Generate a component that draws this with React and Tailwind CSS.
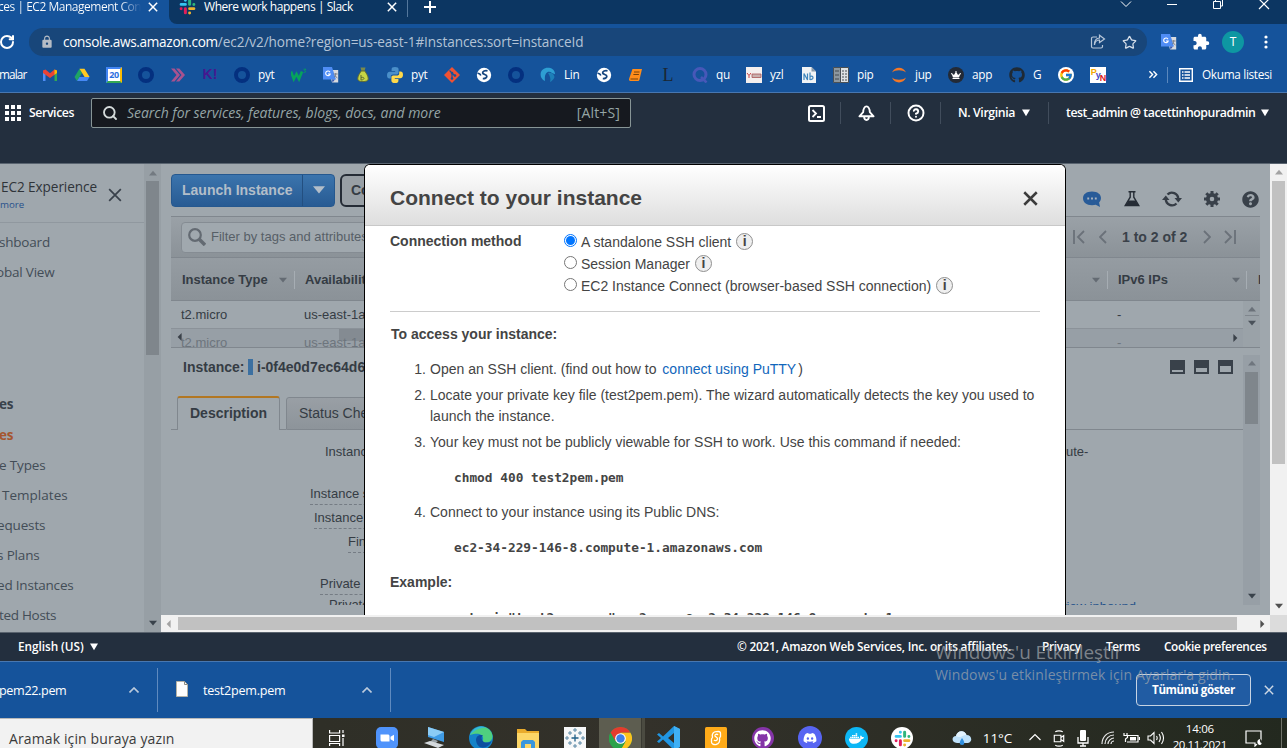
import React from "react";
import { FaGithub, FaDiscord, FaDocker, FaQuestionCircle, FaCrown } from "react-icons/fa";
import { FcGoogle } from "react-icons/fc";
import { MdExtension, MdLock } from "react-icons/md";
import { RotateCw, Star, CircleHelp, Search } from "lucide-react";

const UI = "font-['Open_Sans','Noto_Sans',sans-serif]";
const ARIAL = "font-['Liberation_Sans',Arial,sans-serif]";
const MONO = "font-['DejaVu_Sans_Mono',monospace] text-[12.8px] font-bold";

function Tri({ dir = "down", className = "" }) {
  const d = { fat: "M0 .5h10L5 9z", down: "M0 1h10L5 7z", up: "M0 7h10L5 1z", left: "M7 0v10L2 5z", right: "M3 0v10l5-5z" }[dir];
  return <svg viewBox="0 0 10 10" className={"h-2 w-2 shrink-0 " + className} fill="currentColor"><path d={d} /></svg>;
}

function Cross({ className = "", w = 1.8 }) {
  return (
    <svg viewBox="0 0 12 12" className={"shrink-0 " + className} fill="none" stroke="currentColor" strokeWidth={w}>
      <path d="M1 1l10 10M11 1L1 11" />
    </svg>
  );
}

function Slack({ className }) {
  return (
    <svg viewBox="0 0 16 16" className={className} strokeWidth="2.8" strokeLinecap="round" fill="none">
      <path d="M6 2v.1M2 6h4" stroke="#36c5f0" />
      <path d="M14 6v.1M10 2v4" stroke="#2eb67d" />
      <path d="M10 14v.1M14 10h-4" stroke="#ecb22e" />
      <path d="M2 10v.1M6 14v-4" stroke="#e01e5a" />
    </svg>
  );
}

function Translate() {
  return (
    <svg viewBox="0 0 16 16" className="h-4 w-4 shrink-0">
      <path d="M6 3h9.2v12.5H9z" fill="#d8dade" />
      <path d="M0 0h9l4 12.5H0z" fill="#4f8df5" />
      <path d="M9 12.5h3l-2.5 3z" fill="#3355b0" />
      <path d="M7 5.2A2.3 2.3 0 1 0 7.2 7H5" fill="none" stroke="#fff" strokeWidth="1.1" />
      <path d="M10.5 7h4.2M12.7 6v1c0 2-1 3-1.8 3.6M12 8.4c.5 1.2 1.4 2 2.5 2.6" stroke="#70757d" fill="none" strokeWidth=".8" />
    </svg>
  );
}

function Chrome({ className }) {
  return (
    <svg viewBox="0 0 24 24" className={className}>
      <circle cx="12" cy="12" r="12" fill="#2ca24c" />
      <path d="M1.6 6A12 12 0 0 1 22.4 6H12L6.8 15z" fill="#e33b2e" />
      <path d="M12 6h10.4A12 12 0 0 1 12 24l5.2-9z" fill="#fcc31e" />
      <path d="M1.6 6A12 12 0 0 0 12 24l5.2-9H6.8z" fill="#2ca24c" />
      <circle cx="12" cy="12" r="5.6" fill="#fff" />
      <circle cx="12" cy="12" r="4.4" fill="#3f7fe8" />
    </svg>
  );
}

const S = ({ children }) => <svg viewBox="0 0 16 16" className="h-4 w-4 shrink-0">{children}</svg>;
const Ring = () => <S><circle cx="8" cy="8" r="6" fill="none" stroke="#04307f" strokeWidth="4" /></S>;
const Globe = () => (
  <S>
    <circle cx="8" cy="8" r="7.2" fill="#fff" />
    <path d="M11.500 3.800C9 3.200 6.500 4.200 6.700 6c.3 1.700 4 1.300 4.100 3.200 0 1.800-2 2.600-4 2.500" fill="none" stroke="#16467f" strokeWidth="1.800" />
    <path d="M1.500 6.200c1.500 0 2.800.8 3.300 2.300" fill="none" stroke="#16467f" strokeWidth="1.500" />
  </S>
);
const Python = () => (
  <S>
    <path d="M8 0C5.500 0 4.600.9 4.600 2.300V4H8.200v.7H2.700C1 4.700 0 6 0 8.200s1 3.300 2.300 3.300h1.500V9.600c0-1.300 1-2.200 2.200-2.200h3.800c1.100 0 1.800-.8 1.800-1.800V2.300C11.600.8 10.200 0 8 0z" fill="#4a8fc9" />
    <path d="M8 16c2.500 0 3.400-.9 3.400-2.300V12H7.800v-.7h5.500c1.700 0 2.700-1.300 2.700-3.500s-1-3.300-2.300-3.300h-1.500v1.900c0 1.300-1 2.200-2.200 2.200H6.200c-1.100 0-1.800.8-1.800 1.800v3.300C4.400 15.200 5.800 16 8 16z" fill="#ffd94a" />
  </S>
);

const bookmarks = [
  ["w-[32px]", <S key="i"><path d="M1 14V4l2.500-1v11z" fill="#4f8df5" /><path d="M15 14V4l-2.500-1v11z" fill="#34a853" /><path d="M1 3.500L3.500 2.600 8 6.200l4.500-3.600L15 3.500V6L8 11 1 6z" fill="#ea4335" /><path d="M12.500 2.600L15 3.500V6l-2.500 1.800z" fill="#fbbc04" /></S>],
  ["w-[32px]", <S key="i"><path d="M5.500 1.800L8 6 3 14 .5 10z" fill="#1fa463" /><path d="M5.500 1.800h5L15.600 10h-5z" fill="#ffc922" /><path d="M5.500 10h10L13 14H3z" fill="#4688f4" /></S>],
  ["w-[32px]", <span key="i" className="flex h-4 w-4 items-center justify-center border-[2.5px] border-t-[#4285f4] border-r-[#fbbc04] border-b-[#34a853] border-l-[#4285f4] bg-white text-[9px] font-bold tracking-[-0.5px] text-[#2d6fe0]">20</span>],
  ["w-[32px]", <Ring key="i" />],
  ["w-[32px]", <S key="i"><path d="M1 1.500l5.500 6.500L1 14.500h3.500L10 8 4.500 1.500zM6 1.500L11.500 8 6 14.500h3.300L15 8 9.300 1.500z" fill="#a8528f" /></S>],
  ["w-[32px]", <span key="i" className="w-4 pb-0.5 text-center font-['Liberation_Sans'] text-[14px] font-bold text-[#46178f]">K!</span>],
  ["w-[57px]", <Ring key="i" />, "pyt"],
  ["w-[32px]", <S key="i"><path d="M0 4.500l2.800 7.500 2.700-5 2.500 5 3-7.500" fill="none" stroke="#06a35c" strokeWidth="2.600" /><path d="M12.500 2.200h2.400l-1.300 1.500c1.300 0 1.600 2.200-.9 1.800" fill="none" stroke="#06a35c" strokeWidth=".9" /></S>],
  ["w-[32px]", <Translate key="i" />],
  ["w-[32px]", <S key="i"><path d="M5.500.5h5L9.500 4h-3z" fill="#7a8a4b" /><path d="M6.200 4h3.600c1.600 2.500 3.500 5 3.500 8 0 3.500-10.600 3.500-10.600 0 0-3 1.900-5.500 3.500-8z" fill="#c6d645" stroke="#5d6b37" strokeWidth="1" /><path d="M6 8v5M6 10.500c4-1 4 2.500 0 2.500" fill="none" stroke="#5d6b37" strokeWidth="1" /></S>],
  ["w-[57px]", <Python key="i" />, "pyt"],
  ["w-[32px]", <S key="i"><path d="M8 0l8 8-8 8-8-8z" fill="#f05133" /><path d="M5.500 3.500L8 6v6M8 6l3 3" stroke="#15539b" strokeWidth="1.200" fill="none" /><circle cx="8" cy="6" r="1.300" fill="#15539b" /><circle cx="8" cy="11.500" r="1.300" fill="#15539b" /><circle cx="11" cy="8.500" r="1.300" fill="#15539b" /></S>],
  ["w-[32px]", <Globe key="i" />],
  ["w-[32px]", <Ring key="i" />],
  ["w-[56px]", <S key="i"><path d="M1 10C-1 3 5 0 9 .8c4 .6 6 3.500 6 6.500L12 6C8 3 4 6 5 14c-2-1-3.500-2.500-4-4z" fill="#2e9fd3" /><path d="M8 6c3-1 6 .5 6.500 4-.8 2.500-2.500 4-4.500 5 1-3 0-6-2-9z" fill="#1d7fb8" /></S>, "Lin"],
  ["w-[32px]", <Globe key="i" />],
  ["w-[32px]", <S key="i"><path d="M4.500 2h9.500L11.500 12.500c-.3 1-.8 1.500-2 1.500H2.500C1 14 .8 12.800 1.200 11.500z" fill="#ff8c1a" /><path d="M6 5h5.500M5.400 7.500h5.500M2.500 12h7.500" stroke="#7a4208" strokeWidth="1.100" /></S>],
  ["w-[32px]", <span key="i" className="w-4 text-center font-['Liberation_Serif'] text-[18px] leading-4 text-[#1b2733]">L</span>],
  ["w-[54px]", <S key="i"><circle cx="8" cy="7.500" r="6" fill="none" stroke="#4758b8" strokeWidth="3" /><path d="M9 10l5.500 5.500" stroke="#4758b8" strokeWidth="2.500" /></S>, "qu"],
  ["w-[55px]", <S key="i"><path d="M0 0h16v16H0z" fill="#f4efee" /><path d="M1 6l2 2.500L5 6M3 8.500V11" stroke="#c44" fill="none" /><path d="M6 7h9v3.500H6z" fill="#c9b0ae" stroke="#a55" strokeWidth=".8" /></S>, "yzl"],
  ["w-[32px]", <S key="i"><path d="M1 0h9.500L15 4.500V16H1z" fill="#f1f3f5" /><path d="M10.500 0v4.500H15" fill="#8a99a8" /><path d="M3 13V6.500L6.500 13V6.500M9 5.500V13M9 9.500c4-1.500 4 3.500 0 3" stroke="#3f86bd" strokeWidth="1.200" fill="none" /></S>],
  ["w-[58px]", <S key="i"><path d="M.5.500h7v15h-7zM7.500.500h8v15h-8z" fill="#dfe2e3" stroke="#4a5055" /><path d="M1 1h6v14H1z" fill="#8d979e" /><path d="M2 4h4M2 8h4M2 12h4M9 4h2M12 4h2M9 7h2M12 7h2M9 10h2M12 10h2M9 13h2M12 13h2" stroke="#454c52" strokeWidth="1.200" /></S>, "pip"],
  ["w-[57px]", <S key="i"><path d="M1 5.500C3.500-1 12.500-1 15 5.500 11.500 2.500 4.500 2.500 1 5.500zM1 10.500c2.500 6.500 11.500 6.500 14 0-3.500 3-10.500 3-14 0z" fill="#f37726" /></S>, "jup"],
  ["w-[61px]", <span key="i" className="flex h-4 w-4 items-center justify-center rounded-full bg-[#232a36]"><FaCrown className="h-2 w-2.5 text-white" /></span>, "app"],
  ["w-[49px]", <FaGithub key="i" className="h-4 w-4 shrink-0 text-[#1f2a35]" />, "G"],
  ["w-[32px]", <span key="i" className="flex h-4 w-4 items-center justify-center rounded-full bg-white"><FcGoogle className="h-3.5 w-3.5" /></span>],
  ["w-[50px]", <span key="i" className="flex h-4 w-4 items-center justify-center bg-white font-['Liberation_Sans'] text-[9px] font-bold tracking-[-1px]"><i className="mb-1.5 not-italic text-[#f5a800]">P</i><i className="not-italic text-[#4747c9]">y</i><i className="mt-1.5 not-italic text-[#e02020]">N</i></span>],
];

function BrowserChrome() {
  return (
    <div className={"flex h-[93px] shrink-0 flex-col border-b border-[#4877b0] bg-[#15539b] text-white " + UI}>
      <div className="flex h-6 shrink-0">
        <div className="flex h-6 w-[169px] shrink-0 items-start">
          <div className="flex w-[141px] overflow-hidden whitespace-nowrap bg-linear-to-r from-white from-85% to-[#15539b] bg-clip-text text-[12px] leading-[14px] text-transparent">
            <span className="-ml-0.5 tracking-[-0.48px]">ces | EC2 Management Con</span>
          </div>
          <Cross className="mt-0.5 ml-[7px] h-2.5 w-2.5" />
        </div>
        <div className="flex flex-1 items-start rounded-bl-lg bg-[#0c3662]">
          <div className="flex h-[17px] w-[239px] items-start border-r border-[#54779c]">
            <Slack className="-mt-0.5 ml-[10px] h-[17px] w-[17px]" />
            <span className="ml-[8px] w-[183px] text-[12px] leading-[14px] tracking-[-0.45px]">Where work happens | Slack</span>
            <Cross className="mt-0.5 h-2.5 w-2.5" />
          </div>
          <svg viewBox="0 0 12 12" className="mt-px ml-[16px] h-3 w-3" stroke="#fff" strokeWidth="2"><path d="M6 0v12M0 6h12" /></svg>
          <div className="ml-auto flex h-3 items-start gap-[34px] pr-[17px]">
            <svg viewBox="0 0 12 12" className="h-3 w-3" fill="none" stroke="#fff"><path d="M1 1.500l5 5 5-5" /></svg>
            <svg viewBox="0 0 12 12" className="h-3 w-3" stroke="#fff"><path d="M1 4.500h10" /></svg>
            <svg viewBox="0 0 12 12" className="h-3 w-3" fill="none" stroke="#fff"><path d="M1.500 1.500h7v7h-7zM3.500 1V-1h7v7H9" /></svg>
            <svg viewBox="0 0 12 12" className="h-3 w-3" stroke="#fff" strokeWidth="1.200"><path d="M1-1l10 10M11-1L1 9" /></svg>
          </div>
        </div>
      </div>
      <div className="flex h-9 shrink-0 items-center">
        <RotateCw className="-ml-px h-[16px] w-[16px] shrink-0" strokeWidth={3} />
        <div className="ml-[14px] flex h-7 w-[1118px] items-center rounded-full bg-[#18467a] pr-[10px] pl-[11px]">
          <MdLock className="h-[14px] w-[14px] text-[#b5bcc5]" />
          <span className="ml-[9px] text-[13.6px] text-[#b3c3d6]"><span className="tracking-[-0.32px] text-white">console.aws.amazon.com</span><span className="tracking-[-0.09px]">/ec2/v2/home?region=us-east-1#Instances:sort=instanceId</span></span>
          <svg viewBox="0 0 16 16" className="ml-auto h-4 w-4" fill="none" stroke="#b7c6d8" strokeWidth="1.200"><path d="M7 3H3.200C2 3 1.500 3.600 1.500 4.500v8c0 1 .6 1.500 1.500 1.500h8c1 0 1.500-.6 1.500-1.500V11M4.500 11c.5-3.500 2.500-5 5-5V8.500L14.500 5 9.500 1.200V4C6 4 4.200 7 4.500 11z" /></svg>
          <Star className="ml-4 h-[15px] w-[15px] text-[#d6dfea]" strokeWidth={2} />
        </div>
        <div className="ml-[14px]"><Translate /></div>
        <MdExtension className="ml-[15px] h-[18px] w-[18px]" />
        <span className="ml-[12px] flex h-[22px] w-[22px] items-center justify-center rounded-full bg-[#0e97a2] text-[12px]">T</span>
        <svg viewBox="0 0 4 14" className="ml-[20px] h-3.5 w-1" fill="#fff"><circle cx="2" cy="2" r="1.600" /><circle cx="2" cy="7" r="1.600" /><circle cx="2" cy="12" r="1.600" /></svg>
      </div>
      <div className="flex h-[29px] shrink-0 items-center text-[11.800px] leading-4">
        <div className="w-[42px] shrink-0 pb-[2px]"><span className="-ml-px tracking-[-0.9px]">malar</span></div>
        {bookmarks.map(([w, icon, label], i) => (
          <div key={i} className={"flex shrink-0 items-center gap-2 " + w}>
            {icon}
            {label && <span className="pb-[2px] tracking-[-0.3px]">{label}</span>}
          </div>
        ))}
        <svg viewBox="0 0 12 10" className="ml-[7px] h-[9px] w-[12px]" fill="none" stroke="#fff" strokeWidth="1.600"><path d="M2 1.500L5.500 5 2 8.500M6.500 1.500L10 5 6.500 8.500" /></svg>
        <div className="ml-2 h-4 border-l border-[#5b88bd]" />
        <svg viewBox="0 0 14 14" className="ml-[11px] h-3.5 w-3.5" fill="none" stroke="#fff"><path d="M.7.700h12.600v12.600H.7z" strokeWidth="1.400" /><path d="M3 4h1.500M3 7h1.500M3 10h1.500M5.500 4H11M5.500 7H11M5.500 10H11" strokeWidth="1.500" /></svg>
        <span className="ml-[9px] pb-[2px] whitespace-nowrap tracking-[-0.32px]">Okuma listesi</span>
      </div>
    </div>
  );
}

function AwsHeader() {
  return (
    <div className={"flex h-[71px] shrink-0 items-start border-b border-[#596470] bg-[#232f3e] text-[12.3px] text-white " + UI}>
      <div className="flex h-10 w-full items-center">
        <svg viewBox="0 0 16 16" className="ml-[5px] h-4 w-4" fill="#fff"><path d="M0 0h4v4H0zM6 0h4v4H6zM12 0h4v4h-4zM0 6h4v4H0zM6 6h4v4H6zM12 6h4v4h-4zM0 12h4v4H0zM6 12h4v4H6zM12 12h4v4h-4z" /></svg>
        <span className="ml-2 w-[62px] pt-px font-semibold tracking-[-0.4px]">Services</span>
        <div className="flex h-[30px] w-[540px] items-center rounded-[2px] border border-[#879596] bg-[#16191f] px-[10px] text-[14px] text-[#95a5a6]">
          <Search className="h-4 w-4 text-[#d5dbdb]" strokeWidth={2.800} />
          <span className="ml-[9px] pb-px tracking-[-0.03px] italic">Search for services, features, blogs, docs, and more</span>
          <span className="ml-auto pb-px tracking-[0.15px]">[Alt+S]</span>
        </div>
        <svg viewBox="0 0 17 17" className="ml-[177px] h-[17px] w-[17px]" fill="none" stroke="#fff" strokeWidth="2"><rect x="1" y="1" width="15" height="15" rx="1.500" /><path d="M4.500 5l3.500 3.500L4.500 12M9 12h4" strokeWidth="1.800" /></svg>
        <div className="ml-[15px] h-[22px] border-l border-[#414d5c]" />
        <svg viewBox="0 0 18 18" className="ml-[17px] h-[18px] w-[17px]" fill="none" stroke="#fff" strokeWidth="2"><path d="M1.500 12.500h15L12.500 8C12.500 5 11 2 9 2S5.500 5 5.500 8zM6.500 13c0 4.500 5 4.500 5 0" strokeLinejoin="round" /></svg>
        <div className="ml-[15px] h-[22px] border-l border-[#414d5c]" />
        <CircleHelp className="ml-[16px] h-[18px] w-[18px]" strokeWidth={2.600} />
        <div className="ml-[15px] h-[22px] border-l border-[#414d5c]" />
        <span className="ml-[17px] w-[64px] pt-px font-semibold whitespace-nowrap tracking-[-0.38px]">N. Virginia</span>
        <Tri dir="fat" />
        <div className="ml-[18px] h-[22px] border-l border-[#414d5c]" />
        <span className="ml-[17px] w-[195px] pt-px font-semibold whitespace-nowrap tracking-[-0.45px]">test_admin @ tacettinhopuradmin</span>
        <Tri dir="fat" />
      </div>
    </div>
  );
}

function Sidebar() {
  return (
    <div className={"flex w-[161px] shrink-0 " + UI}>
      <div className="flex w-[144px] flex-col overflow-hidden text-[13.500px] whitespace-nowrap text-[#434d57]">
        <div className="flex h-[59px] shrink-0 justify-between border-b border-[#90989f] pt-[13px] pr-[22px]">
          <div className="flex flex-col pl-px">
            <span className="text-[13.600px] leading-5 tracking-[-0.08px] text-[#2f3439]">EC2 Experience</span>
            <span className="mt-[2px] -ml-px text-[9.700px] leading-3 text-[#27518c]">more</span>
          </div>
          <Cross className="mt-[11px] h-[14px] w-[14px] text-[#39414b]" w={1.500} />
        </div>
        <div className="mt-1 flex h-[150px] shrink-0 flex-col leading-[30px]">
          <span className="-ml-px tracking-[-0.2px]">shboard</span>
          <span className="-ml-1 tracking-[-0.2px]">obal View</span>
        </div>
        <div className="mt-[12px] flex flex-col leading-[30px] tracking-[-0.15px]">
          <span className="-ml-px font-bold leading-[31px] text-[#39424b]">es</span>
          <span className="-ml-px font-bold text-[#a5562f]">es</span>
          <span className="-ml-px">e Types</span>
          <span className="ml-[2px] tracking-[0.02px]">Templates</span>
          <span className="-ml-[3px]">equests</span>
          <span className="-ml-[3px]">s Plans</span>
          <span className="-ml-[3px] tracking-[-0.2px]">ed Instances</span>
          <span className="-ml-px tracking-[-0.3px]">ted Hosts</span>
        </div>
      </div>
      <div className="flex w-[17px] flex-col items-center bg-[#979fa5] pt-1 text-[#737a81]">
        <Tri dir="up" className="mt-0.5" />
        <div className="mt-[3px] h-[174px] w-[13px] bg-[#7f868c]" />
        <Tri className="mt-auto mb-[4px] text-[#39424b]" />
      </div>
    </div>
  );
}

const icoLine = "h-[14px]";
const dashed = "border-b border-dashed border-[#757c84]";

function Console() {
  return (
    <div className={"flex h-[451px] w-[1109px] flex-col overflow-hidden bg-[#9fa7ad] pr-[10px] pl-[10px] text-[13px] whitespace-nowrap text-[#353c44] " + ARIAL}>
      <div className="flex h-[52px] shrink-0 items-start pt-[10px]">
        <div className="flex h-[33px] w-[164px] items-center rounded border border-[#25588f] bg-linear-to-b from-[#3b74ad] to-[#285b93] text-[14px] font-bold text-[#b3bec9]">
          <span className="w-[130px] pl-[10px]">Launch Instance</span>
          <span className="flex h-full flex-1 items-center justify-center border-l border-[#234f80] pt-px"><Tri className="h-3 w-3" /></span>
        </div>
        <div className="ml-[5px] flex h-[33px] w-[90px] items-center rounded-md border-2 border-[#252c36] bg-[#989fa5] pl-[9px] text-[14px] font-bold">Connect</div>
        <div className="ml-auto flex items-center gap-[22px] pt-[16px] pr-[1px]">
          <svg viewBox="0 0 20 18" className="h-[17px] w-[20px]"><path d="M10 .5c6 0 9.500 3 9.500 7 0 2-.8 3.600-2 4.800l1 4.700-4.500-2.500c-1 .3-2.500.5-4 .5C4 15 .5 12 .5 7.700S4 .5 10 .5z" fill="#285b98" /><path d="M5 7h2v2H5zM9 7h2v2H9zM13 7h2v2h-2z" fill="#a9b4bf" /></svg>
          <svg viewBox="0 0 16 16" className="h-4 w-4"><path d="M4.500.800h7M6.200 1v5.200L1.200 14.500h13.600L9.800 6.200V1" fill="none" stroke="#252c35" strokeWidth="1.400" /><path d="M4.500 9.500h7l3.500 5.500H1z" fill="#252c35" /></svg>
          <svg viewBox="0 0 20 18" className="h-[18px] w-[20px]" fill="none" stroke="#363d46" strokeWidth="2.400"><path d="M5.500 4.500A6.300 6.300 0 0 1 16.200 9M14.500 13.500A6.300 6.300 0 0 1 3.800 9" /><path d="M12.500 8h7.500l-3.700 4.500zM0 10h7.500L3.800 5.500z" fill="#363d46" stroke="none" /></svg>
          <svg viewBox="0 0 16 16" className="h-4 w-4"><circle cx="8" cy="8" r="4.200" fill="none" stroke="#39414a" strokeWidth="3.800" /><path d="M8 0v4M8 12v4M0 8h4M12 8h4M2.300 2.300l3 3M10.700 10.700l3 3M13.700 2.300l-3 3M5.300 10.700l-3 3" stroke="#39414a" strokeWidth="3" /></svg>
          <FaQuestionCircle className="h-[17px] w-[17px] text-[#39414a]" />
        </div>
      </div>
      <div className="flex h-[42px] shrink-0 items-center border-t border-b border-[#80878e] bg-linear-to-b from-[#9aa1a7] to-[#8b9298] pl-[10px]">
        <div className="flex h-[31px] w-[400px] items-center rounded border border-[#858c93] bg-[#a0a8ae] pl-[6px] text-[#575f67]">
          <svg viewBox="0 0 18 18" className="h-[18px] w-[18px]" fill="none" stroke="#636a72"><circle cx="7" cy="7" r="5.800" strokeWidth="2.200" /><path d="M11 11l6 6" strokeWidth="3.500" /></svg>
          <span className="ml-[5px]">Filter by tags and attributes or search by keyword</span>
        </div>
        <div className="ml-auto flex items-center pr-[24px] text-[#6a7179]">
          <svg viewBox="0 0 12 14" className={icoLine} fill="none" stroke="currentColor" strokeWidth="1.800"><path d="M1 0v14M11 1L5 7l6 6" /></svg>
          <svg viewBox="0 0 8 14" className={"ml-[14px] " + icoLine} fill="none" stroke="currentColor" strokeWidth="1.800"><path d="M7 1L1 7l6 6" /></svg>
          <span className="mx-[15px] w-[66px] text-[14px] font-bold text-[#3a4149]">1 to 2 of 2</span>
          <svg viewBox="0 0 8 14" className={icoLine} fill="none" stroke="currentColor" strokeWidth="1.800"><path d="M1 1l6 6-6 6" /></svg>
          <svg viewBox="0 0 12 14" className={"ml-[13px] " + icoLine} fill="none" stroke="currentColor" strokeWidth="1.800"><path d="M11 0v14M1 1l6 6-6 6" /></svg>
        </div>
      </div>
      <div className="flex h-[43px] shrink-0 items-center border-b border-[#80878e] bg-linear-to-b from-[#959ca2] to-[#8b9298] pt-px font-bold">
        <span className="w-[108px] pl-[11px]">Instance Type</span>
        <Tri className="mt-0.5 text-[#646b73]" />
        <div className="ml-[7px] h-[18px] border-l border-[#a6adb3]" />
        <span className="w-[797px] pl-[10px]">Availability Zone</span>
        <Tri className="mt-0.5 text-[#646b73]" />
        <div className="ml-[7px] h-[18px] border-l border-[#a6adb3]" />
        <span className="w-[124px] pl-[10px]">IPv6 IPs</span>
        <Tri className="mt-0.5 text-[#646b73]" />
        <div className="ml-[6px] h-[18px] border-l border-[#a6adb3]" />
        <span className="w-[13px] overflow-hidden pl-[11px]">K</span>
      </div>
      <div className="flex h-[47px] shrink-0 border-b border-[#80878e]">
        <div className="flex w-[1072px] flex-col">
          <div className="flex h-[28px] shrink-0 items-center border-b border-[#8b9299]">
            <span className="w-[133px] pl-[10px]">t2.micro</span><span className="w-[813px]">us-east-1a</span><span>-</span>
          </div>
          <div className="flex h-[18px] items-center overflow-hidden bg-[#979fa6] text-[#6d757d]">
            <Tri dir="left" className="-mt-0.5 ml-[5px] -mr-[3px] h-2.5 w-2 text-[#3a4149]" />
            <span className="w-[123px] pt-[9px]">t2.micro</span>
            <span className="relative z-0 w-[813px] pt-[9px] before:absolute before:top-[3px] before:left-[35px] before:-z-10 before:h-[14px] before:w-[400px] before:bg-[#848b92]">us-east-1a</span>
            <span className="pt-[9px]">-</span>
            <Tri dir="right" className="mr-1 ml-auto h-2.5 w-2 text-[#3a4149]" />
          </div>
        </div>
        <div className="flex w-[17px] flex-col items-center bg-[#9aa2a8]">
          <Tri dir="up" className="mt-[5px] text-[#6a7179]" />
          <div className="mt-px w-3.5 border-b border-[#80878e]" />
          <Tri className="mt-1 text-[#4a525a]" />
        </div>
      </div>
      <div className="flex h-[257px] shrink-0">
        <div className="flex w-[1072px] flex-col">
          <div className="flex h-[48px] shrink-0 items-start pt-[8px] pl-[12px] text-[14px] font-bold">
            <span className="w-[65px] leading-[23px]">Instance:</span>
            <div className="mt-[3px] h-4 w-[5px] bg-[#3c70a1]" />
            <span className="ml-[4px] leading-[23px]">i-0f4e0d7ec64d67b93</span>
            <svg viewBox="0 0 64 14" className="mt-1 mr-[9px] ml-auto h-[14px] w-[64px]" fill="#39414a" fillRule="evenodd"><path d="M0 0h15v14H0zM2 10h11v2H2zM24 0h15v14H24zM26 8h11v4H26zM48 0h15v14H48zM50 6h11v6H50z" /></svg>
          </div>
          <div className="flex h-[34px] shrink-0 items-end text-[14px]">
            <div className="h-full w-[6px] border-b border-[#80878e]" />
            <div className="flex h-[34px] w-[103px] items-center rounded-t-[3px] border-t-2 border-r border-l border-t-[#b27722] border-r-[#80878e] border-l-[#80878e] pb-px pl-[12px] font-bold">Description</div>
            <div className="h-full w-[6px] border-b border-[#80878e]" />
            <div className="flex h-[33px] w-[120px] items-center rounded-t-[3px] border border-[#80878e] bg-linear-to-b from-[#999fa5] to-[#8d949a] pl-[12px]">Status Checks</div>
            <div className="h-full flex-1 border-b border-[#80878e]" />
          </div>
          <div className="flex h-[175px] shrink-0 overflow-hidden">
            <div className="flex w-[260px] flex-col items-start pt-[10px] leading-[20px]">
              <span className="ml-[154px] pt-[2px]">Instance ID</span>
              <span className={"mt-[22px] ml-[139px] " + dashed}>Instance state</span>
              <span className={"mt-[3px] ml-[143px] " + dashed}>Instance type</span>
              <span className={"mt-[3px] ml-[177px] " + dashed}>Finding</span>
              <span className={"mt-[21px] ml-[149px] " + dashed}>Private DNS</span>
              <span className="ml-[158px]">Private IPs</span>
            </div>
            <div className="flex w-[680px] flex-col items-start pt-[12px] pl-[635px] leading-[20px]">
              <span>ute-</span>
              <span className="mt-[135px] -ml-[6px] text-[#24528a]">view inbound</span>
            </div>
          </div>
        </div>
        <div className="mt-[7px] flex w-[17px] flex-col items-center bg-[#979fa6]">
          <Tri dir="up" className="mt-[5px] text-[#6f767e]" />
          <div className="mt-[4px] h-[52px] w-[13px] bg-[#7f868c]" />
          <Tri className="mt-auto mb-[4px] text-[#39424b]" />
        </div>
      </div>
    </div>
  );
}

const Info = () => <span className="mt-[-2px] ml-[5px] flex h-[17px] w-[17px] items-center justify-center rounded-full border border-[#8f8f8f] bg-[#efefef] font-['Liberation_Sans'] text-[14px] font-bold">i</span>;

function RadioRow({ checked, children }) {
  return (
    <div className="flex h-[22px] items-center">
      <span className={"mt-[-3px] mr-[4px] flex h-[13px] w-[13px] items-center justify-center rounded-full border " + (checked ? "border-[#0075ff]" : "border-[#767676]")}>
        {checked && <span className="h-[9px] w-[9px] rounded-full bg-[#0075ff]" />}
      </span>
      {children}
      <Info />
    </div>
  );
}

function Step({ n, children }) {
  return (
    <li className="flex leading-[21px]">
      <span className="w-[36px] text-right">{n}.</span>
      <span className="ml-[4px]">{children}</span>
    </li>
  );
}

function Modal() {
  return (
    <div className={"absolute top-0 left-[203px] flex h-[451px] w-[702px] flex-col overflow-hidden rounded-t-md border border-b-0 border-black bg-white text-[14px] text-[#444] " + ARIAL}>
      <div className="flex h-[61px] shrink-0 items-center justify-between border-b border-[#c8c8c8] bg-linear-to-b from-white to-[#dedede] pt-[6px] pr-[27px] pl-[25px]">
        <h1 className="text-[21px] font-bold">Connect to your instance</h1>
        <Cross className="h-[15px] w-[15px] text-[#3c3c3c]" w={2} />
      </div>
      <div className="flex flex-col pr-[25px] pl-[25px]">
        <div className="flex border-b border-[#ccc] pt-[4px] pb-[14px] leading-[22px]">
          <span className="w-[174px] font-bold">Connection method</span>
          <div className="flex flex-col pt-px">
            <RadioRow checked>A standalone SSH client</RadioRow>
            <RadioRow>Session Manager</RadioRow>
            <RadioRow>EC2 Instance Connect (browser-based SSH connection)</RadioRow>
          </div>
        </div>
        <h2 className="mt-[12px] ml-px leading-[21px] font-bold">To access your instance:</h2>
        <ol className="mt-[14px] flex flex-col gap-[5px]">
          <Step n={1}>Open an SSH client. (find out how to <span className="mx-[2px] text-[#1166bb]">connect using PuTTY</span>)</Step>
          <Step n={2}>Locate your private key file (test2pem.pem). The wizard automatically detects the key you used to<br />launch the instance.</Step>
          <Step n={3}>Your key must not be publicly viewable for SSH to work. Use this command if needed:</Step>
        </ol>
        <code className={"mt-[14px] ml-[64px] leading-[21px] " + MONO}>chmod 400 test2pem.pem</code>
        <ol className="mt-[14px]"><Step n={4}>Connect to your instance using its Public DNS:</Step></ol>
        <code className={"mt-[14px] ml-[64px] leading-[21px] " + MONO}>ec2-34-229-146-8.compute-1.amazonaws.com</code>
        <h2 className="mt-[14px] leading-[21px] font-bold">Example:</h2>
        <code className={"mt-[14px] ml-[64px] leading-[21px] whitespace-nowrap " + MONO}>ssh -i "test2pem.pem" ec2-user@ec2-34-229-146-8.compute-1</code>
      </div>
    </div>
  );
}

function Footer() {
  return (
    <div className={"flex h-[30px] shrink-0 items-center border-t border-b border-t-[#59636e] border-b-[#4877b0] bg-[#232f3e] pl-[18px] text-[11.800px] font-semibold whitespace-nowrap text-white " + UI}>
      <span className="w-[72px] tracking-[-0.05px]">English (US)</span>
      <Tri dir="fat" />
      <span className="ml-[639px] w-[305px] tracking-[-0.2px]">© 2021, Amazon Web Services, Inc. or its affiliates.</span>
      <span className="w-[64px] tracking-[-0.3px]">Privacy</span>
      <span className="w-[58px] tracking-[-0.3px]">Terms</span>
      <span className="tracking-[-0.4px]">Cookie preferences</span>
    </div>
  );
}

const Up = () => <svg viewBox="0 0 10 6" className="h-[6px] w-[10px]" fill="none" stroke="#bccbdd" strokeWidth="1.600"><path d="M.5 5.500L5 1l4.500 4.500" /></svg>;

function Downloads() {
  return (
    <div className={"flex h-[56px] shrink-0 items-center bg-[#15539b] text-[12.600px] text-white " + UI}>
      <div className="flex h-11 w-[158px] items-center justify-between border-r border-[#5f8abf] pr-[18px]"><span className="-ml-px pt-0.5 tracking-[-0.35px]">pem22.pem</span><Up /></div>
      <div className="flex h-11 w-[233px] items-center border-r border-[#5f8abf] pr-[18px] pl-[18px]">
        <svg viewBox="0 0 12 16" className="mb-0.5 h-4 w-3"><path d="M.5.500h8l3 3v12H.5z" fill="#fdfdfd" stroke="#b5b2a6" /><path d="M8.500.500v3h3" fill="none" stroke="#8d8a80" /></svg>
        <span className="mr-auto ml-[15px] pt-0.5 tracking-[-0.25px]">test2pem.pem</span><Up />
      </div>
      <button className="ml-[745px] h-8 w-[115px] rounded border border-[#c6d3e3] bg-[#215ca3] text-[11.600px] font-bold tracking-[-0.42px]">Tümünü göster</button>
      <Cross className="ml-[13px] h-[10px] w-[10px] text-[#cdd8e5]" />
    </div>
  );
}

const slot = "flex h-[40px] w-[46.8px] shrink-0 items-center justify-center";
const slotL = "flex h-[40px] w-[47px] shrink-0 items-center justify-center pl-[7px]";

function Taskbar() {
  return (
    <div className={"flex h-[30px] shrink-0 items-start overflow-hidden bg-linear-to-r from-[#2b2d24] via-[#33312a] to-[#23291f] text-white " + UI}>
      <div className="h-10 w-[313px] shrink-0 border-t border-r border-[#b9b9b9] bg-[#f2f2f2] pt-[10px] pl-[9px] text-[14px] leading-5 tracking-[0.12px] text-[#3b3b3b]">Aramak için buraya yazın</div>
      <div className="flex h-[40px] w-[47px] shrink-0 items-center justify-center"><svg viewBox="0 0 16 16" className="h-4 w-4" fill="none" stroke="#fff" strokeWidth="1.200"><path d="M.6 0v3h10V0M.6 5.500h10v6H.6zM.6 16v-2.500h10V16M14 0v3M14 8v8" /><path d="M13 4.500h2.500V7H13z" fill="#fff" stroke="none" /></svg></div>
      <div className={slotL}><svg viewBox="0 0 22 22" className="h-[22px] w-[22px]"><rect width="22" height="22" rx="5" fill="#4f93fb" /><path d="M4.500 7.500h7c1.500 0 2 .6 2 2v5h-7c-1.500 0-2-.6-2-2zM14.500 9.700l3.500-2v6.600l-3.500-2z" fill="#fff" /></svg></div>
      <div className={slotL}><svg viewBox="0 0 24 22" className="ml-1 h-[22px] w-[24px]"><path d="M4 0l16 5v10L4 10z" fill="#3f9be5" /><path d="M4 0l16 5-10 5-6-2z" fill="#8bcbf5" /><path d="M9 12l5 2-3 3-5-2z" fill="#9aa3a8" /><path d="M0 16l6-2 14 4-6 3z" fill="#d5dadd" /></svg></div>
      <div className={slotL}><svg viewBox="0 0 24 24" className="h-6 w-6"><circle cx="12" cy="12" r="12" fill="#1583c8" /><path d="M1 9C4 .5 14-1.500 20 3.200 25 8 25 15 18 16.500c-3 .4-5.500-1-4-3C15 9 10 6 1 9z" fill="#4fd07f" /><path d="M1 9C4 1 12-1 17 1.500 10 2 6 4 1 9z" fill="#35b8d8" /><path d="M7 14c0-4 4-6 7-4.500C11 11 13 17 18 16.500c2 0 3-.5 4.500-1.500C20 23 8 25 7 14z" fill="#0d4fa0" /></svg></div>
      <div className={slotL}><svg viewBox="0 0 22 20" className="h-5 w-[22px]"><path d="M0 1h8l2 2h12v17H0z" fill="#e9ab2c" /><path d="M0 5h22v15H0z" fill="#fcd667" /><path d="M4 20v-6l2-2h10l2 2v6h-4v-4H8v4z" fill="#3a96dd" /></svg></div>
      <div className={slotL}><svg viewBox="0 0 22 22" className="h-[22px] w-[22px]"><path d="M0 0h22v22H0z" fill="#f6f7f8" /><path d="M11 7.500v7M7.500 11h7" stroke="#1f5f87" strokeWidth="1.300" /><path d="M11 1v4M9 3h4M11 17v4M9 19h4M3 9v4M1 11h4M19 9v4M17 11h4M6 4v4M4 6h4M16 4v4M14 6h4M6 14v4M4 16h4M16 14v4M14 16h4" stroke="#5b88a5" /></svg></div>
      <div className="ml-[4px] flex h-[40px] w-[43px] shrink-0 items-center justify-center border-r border-[#3a3a32] bg-[#5d5d50]"><Chrome className="h-[23px] w-[23px]" /></div>
      <div className="h-[40px] w-[3px] shrink-0 bg-[#4b4b41]" />
      <div className={slot + " pl-px"}><svg viewBox="0 0 24 24" className="h-6 w-6"><path d="M17 0l6 3v18l-6 3L6 13.500 2 17l-2-1.500L4 12 0 8.500 2 7l4 3.500zM17 7l-6 5 6 5z" fill="#2196e3" fillRule="evenodd" /><path d="M17 0l6 3v18l-6 3z" fill="#3fb0f5" /></svg></div>
      <div className={slot + " pl-px"}><svg viewBox="0 0 22 22" className="h-[22px] w-[22px]"><rect width="22" height="22" rx="1.500" fill="#ffab19" /><path d="M13.500 4.500c1.500 0 2 .8 2 2v3l-1 1.500c.8 3-.5 6-3.500 6.500-2.500.2-4.500-.5-4.500-2.500v-3l1-1.500C6.500 7 8.500 4.500 11.500 4.700z" fill="none" stroke="#fff" strokeWidth="1.300" /><path d="M13 8c-1-1.500-3.500-.5-3 1 .5 1.200 2.800 1 2.500 3-.4 1.800-2.500 2-3.500.8" fill="none" stroke="#fff" strokeWidth="1.300" /></svg></div>
      <div className={slot + " pl-[2px]"}><span className="flex h-[22px] w-[22px] items-center justify-center rounded-full bg-[#8534a8]"><FaGithub className="h-[17px] w-[17px]" /></span></div>
      <div className={slot + " pl-[2px]"}><span className="flex h-6 w-6 items-center justify-center rounded-full bg-[#5865f2]"><FaDiscord className="h-[14px] w-[14px]" /></span></div>
      <div className={slot + " pl-px"}><span className="flex h-[23px] w-[23px] items-center justify-center rounded-full bg-[#0db7f5]"><FaDocker className="h-[15px] w-[15px]" /></span></div>
      <div className={slot}><span className="flex h-[22px] w-[22px] items-center justify-center rounded-full bg-white"><Slack className="h-[17px] w-[17px]" /></span></div>
      <div className="flex h-[40px] shrink-0 items-center pl-[26px]">
        <svg viewBox="0 0 20 16" className="h-4 w-5"><path d="M5 13C-1 13-.5 6 4 6 5 0 13-.5 14.500 5 20 5 21 12 16 13z" fill="#bfe1fa" /><path d="M4 6C5 0 13-.5 14.500 5 10 5 9 9 4 6z" fill="#e3f3fe" /><path d="M10 8c3 4 3 7 0 7s-3-3 0-7z" fill="#2f8fe0" /></svg>
        <span className="ml-[11px] w-[46px] text-[13.500px] tracking-[-0.1px]">11°C</span>
        <svg viewBox="0 0 12 8" className="mb-0.5 h-2 w-3" fill="none" stroke="#fff" strokeWidth="1.200"><path d="M.5 7L6 1.500 11.500 7" /></svg>
        <svg viewBox="0 0 12 18" className="ml-[12px] h-[17px] w-3" fill="none" stroke="#fff"><path d="M1 5.500h7v7H1zM8 8l3-2v6L8 10M2 2c2-1.500 6-1.500 8 0M2 16c2 1.500 6 1.500 8 0" strokeWidth="1.200" /></svg>
        <svg viewBox="0 0 12 18" className="ml-[12px] h-[18px] w-3"><rect x="3" y="1" width="6" height="11" fill="#fff" rx="1" /><path d="M1 8v6h10V8M6 14v3M3 17h6" fill="none" stroke="#fff" strokeWidth="1.300" /></svg>
        <svg viewBox="0 0 14 14" className="ml-[12px] h-[14px] w-[14px]" fill="none" stroke="#e8e8e8" strokeWidth="1.200"><path d="M1 13C1 6 6 1 13 1M4 13c0-5 4-9 9-9M7 13c0-3 3-6 6-6M10 13c0-1.500 1.500-3 3-3" /></svg>
        <svg viewBox="0 0 17 12" className="ml-[8px] h-3 w-[17px]" fill="none" stroke="#fff" strokeWidth="1.200"><path d="M5 3.500h10v6.500H4M16.500 5v3M1 1v3M4 1v3M.5 3.500h4v2L2.500 7v3" /><path d="M7 5h6v3.500H7z" fill="#fff" stroke="none" /></svg>
        <svg viewBox="0 0 18 14" className="ml-[7px] h-3.5 w-[18px]" fill="none" stroke="#fff" strokeWidth="1.100"><path d="M1 5h2.500L7 1.500v11L3.500 9H1zM9.500 5c.8 1.200.8 2.800 0 4M12 3c1.700 2.500 1.700 5.500 0 8M14.500 1c2.700 4 2.700 8 0 12" /></svg>
      </div>
      <div className="ml-[5px] flex w-[60px] shrink-0 flex-col items-center pt-[3px] text-[11.500px] leading-4 tracking-[-0.3px]"><span>14:06</span><span className="tracking-[-0.45px]">20.11.2021</span></div>
      <svg viewBox="0 0 17 17" className="mt-[12px] ml-[15px] h-[17px] w-[17px] shrink-0" fill="none" stroke="#fff" strokeWidth="1.200"><path d="M1 1h15v12h-3l-3 3v-3H1z" /><circle cx="14" cy="12" r="3" fill="#23291f" stroke="none" /><path d="M15 9c-4 1-3 6 0 6 1 0 1.500-1 1.500-2-1 0-2-2-1.500-4z" fill="#fff" stroke="none" /></svg>
      <div className="ml-[19px] h-[30px] border-l border-[#6f7269]" />
    </div>
  );
}

export default function App() {
  return (
    <div className="relative flex h-[748px] w-[1287px] flex-col overflow-hidden bg-[#15539b]">
      <BrowserChrome />
      <AwsHeader />
      <div className="flex h-[468px] shrink-0 bg-[#9fa7ad]">
        <Sidebar />
        <div className="relative flex w-[1109px] flex-col">
          <Console />
          <Modal />
          <div className="flex h-[17px] items-center bg-[#f1f1f1] text-[#505050]">
            <Tri dir="left" className="ml-1 text-[#a3a3a3]" />
            <div className="ml-[5px] h-[13px] w-[1059px] bg-[#c1c1c1]" />
            <Tri dir="right" className="mr-1 ml-auto h-2.5" />
          </div>
        </div>
        <div className="flex w-[17px] flex-col bg-[#dcdcdc]">
          <div className="flex h-[451px] flex-col items-center bg-[#f1f1f1]">
            <Tri dir="up" className="mt-[5px] text-[#a3a3a3]" />
            <div className="mt-[4px] h-[283px] w-[13px] bg-[#c1c1c1]" />
            <Tri className="mt-auto mb-[4px] text-[#505050]" />
          </div>
        </div>
      </div>
      <Footer />
      <Downloads />
      <Taskbar />
      <div className={"absolute top-[639px] left-[935px] flex flex-col whitespace-nowrap text-[#a5a9ad]/70 " + UI}>
        <span className="text-[19px] leading-[27px] tracking-[-0.1px]">Windows'u Etkinleştir</span>
        <span className="text-[14px] leading-[18px] tracking-[0.12px]">Windows'u etkinleştirmek için Ayarlar'a gidin.</span>
      </div>
    </div>
  );
}
